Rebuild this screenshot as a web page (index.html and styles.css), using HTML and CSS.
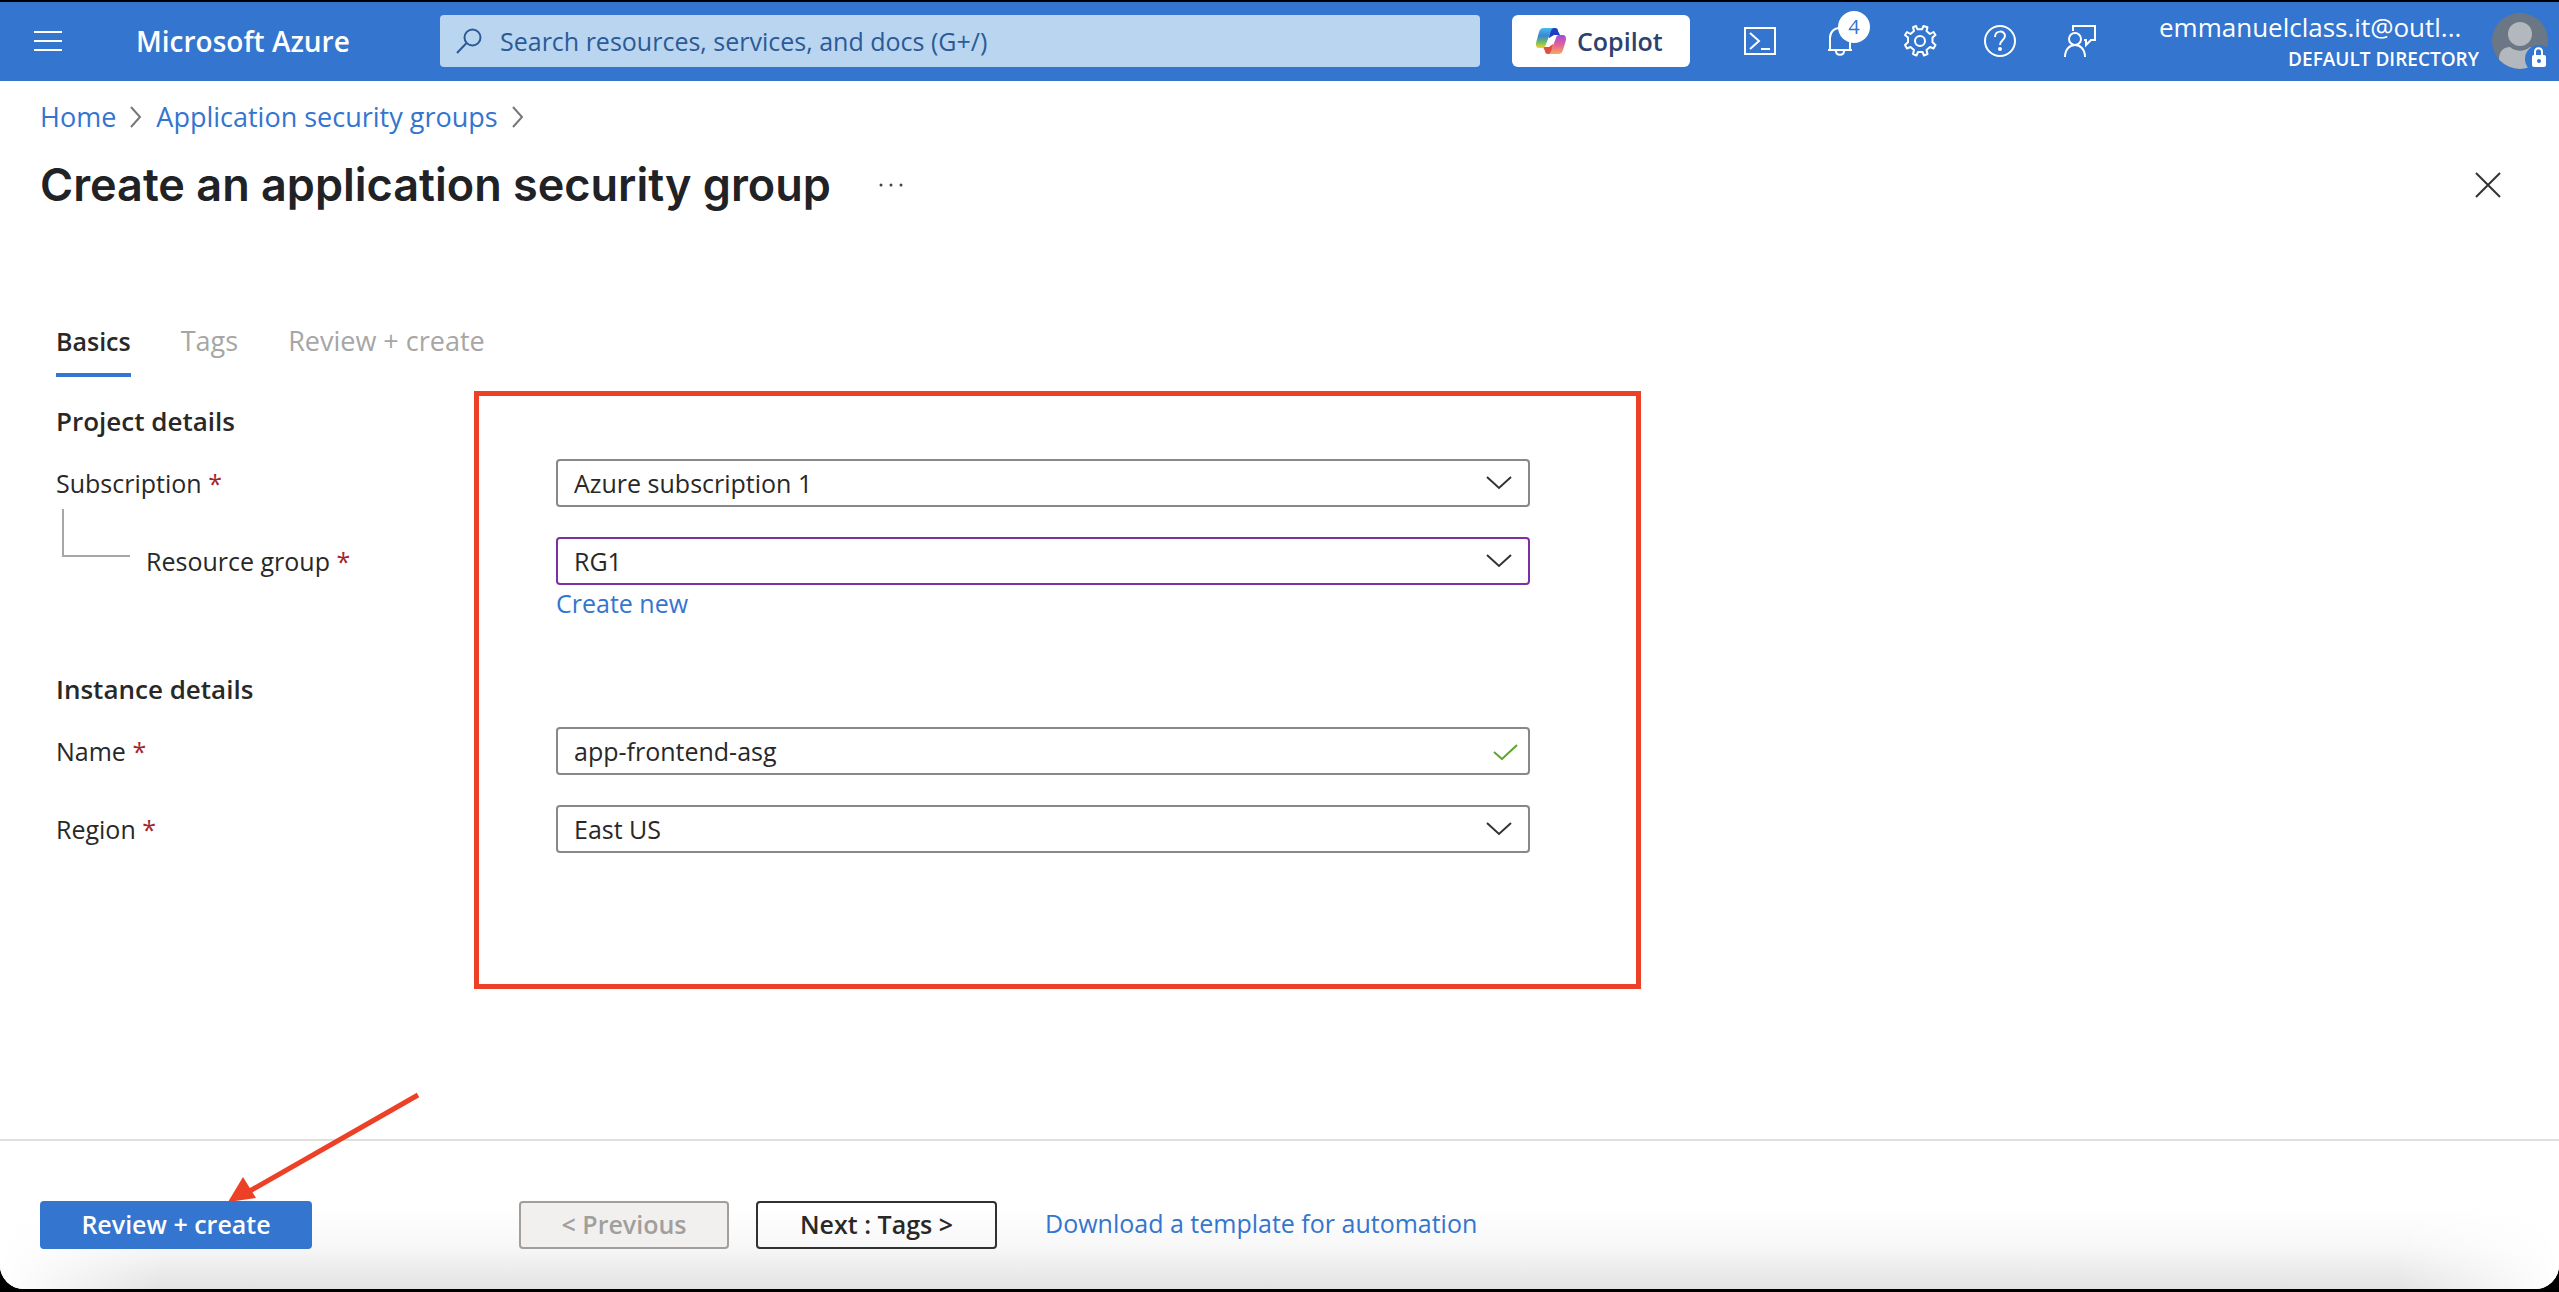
FILE: index.html
```html
<!DOCTYPE html>
<html lang="en">
<head>
<meta charset="utf-8">
<title>Create an application security group - Microsoft Azure</title>
<link rel="stylesheet" href="styles.css">
</head>
<body>
<div class="window">
  <header class="topbar">
    <button class="icon-btn menu-btn" aria-label="Show portal menu">
      <svg width="28" height="20" viewBox="0 0 28 20"><path d="M0 1h28M0 10h28M0 19h28" stroke="#fff" stroke-width="2"/></svg>
    </button>
    <a class="brand" href="#">Microsoft Azure</a>
    <label class="search">
      <svg width="26" height="26" viewBox="0 0 26 26" fill="none" stroke="#2b5a96" stroke-width="2"><circle cx="16.500" cy="9.500" r="8"/><path d="M10.500 15L1 25"/></svg>
      <input type="search" placeholder="Search resources, services, and docs (G+/)" aria-label="Search resources, services, and docs">
    </label>
    <button class="copilot">
      <svg width="30" height="28" viewBox="0 0 30 28">
        <defs>
          <linearGradient id="ca" x1="0" y1="0" x2="0" y2="1"><stop offset="0" stop-color="#4cb8f0"/><stop offset=".4" stop-color="#3a86d0"/><stop offset=".7" stop-color="#6fbd62"/><stop offset="1" stop-color="#f7d02c"/></linearGradient>
          <linearGradient id="cb" x1="0" y1="0" x2="0" y2="1"><stop offset="0" stop-color="#a04de0"/><stop offset=".5" stop-color="#e0609a"/><stop offset="1" stop-color="#f7a85c"/></linearGradient>
        </defs>
        <path d="M14 1h5c2 0 3 1 3 3l2 4h-6l-5 3z" fill="#1d3fc0"/>
        <path d="M16 27h-4c-2 0-3-1-3-3l-2-4h6l4-3z" fill="#e0503c"/>
        <path d="M8 1h10c-2 0-3 2-4 6l-4 10c-1 3-2 4-4 4H4c-4 0-4-2-4-5L3 5c1-3 2-4 5-4z" fill="url(#ca)"/>
        <path d="M22 27H12c2 0 3-2 4-6l4-10c1-3 2-3 4-3h2c4 0 4 2 4 5l-3 10c-1 3-2 4-5 4z" fill="url(#cb)"/>
      </svg>
      <span>Copilot</span>
    </button>
    <nav class="tools" aria-label="Portal tools">
      <button class="icon-btn" aria-label="Cloud Shell">
        <svg width="34" height="34" viewBox="0 0 34 34" fill="none" stroke="#fff" stroke-width="2"><path d="M2 4h30v26H2z"/><path d="M7 9l9 8-9 8M18 25h9"/></svg>
      </button>
      <button class="icon-btn" aria-label="Notifications">
        <svg width="34" height="34" viewBox="0 0 34 34" fill="none" stroke="#fff" stroke-width="2"><path d="M7 26V14c0-6 4-10 10-10s10 4 10 10v12M5 26h24M13 27c0 5 8 5 8 0"/></svg>
        <span class="count">4</span>
      </button>
      <button class="icon-btn" aria-label="Settings">
        <svg width="34" height="34" viewBox="0 0 34 34" fill="none" stroke="#fff" stroke-width="2" stroke-linejoin="round"><circle cx="17" cy="17" r="5"/><path d="M14.500 5.300L13 2l-3 1.200 1 3.800-3.500 3-3.500-2-2 3 3 2.600v4.600L2 21l2 3.500 3.500-1.500 3.500 3-1 4 3.500 1.500 1.500-3.500h4.500l1.500 3.500 3.500-1.500-1-4 3.500-3 3.500 1.500 2-3.500-3-2.800v-4.600l3-2.600-2-3-3.500 2-3.500-3 1-3.800L20.500 2 19 5.300z"/></svg>
      </button>
      <button class="icon-btn" aria-label="Help">
        <svg width="34" height="34" viewBox="0 0 34 34" fill="none" stroke="#fff" stroke-width="2"><circle cx="17" cy="17" r="15"/><path d="M12 13c0-7 10-7 10-1 0 4-5 4-5 9"/><circle cx="17" cy="25" r="1" fill="#fff"/></svg>
      </button>
      <button class="icon-btn" aria-label="Feedback">
        <svg width="34" height="34" viewBox="0 0 34 34" fill="none" stroke="#fff" stroke-width="2"><circle cx="12" cy="15" r="6"/><path d="M2 33c0-16 20-16 20 0M10 7V2h22v14h-4l-5 5v-5h-2"/></svg>
      </button>
    </nav>
    <button class="account">
      <span class="who"><span class="mail">emmanuelclass.it@outl...</span><span class="dir">DEFAULT DIRECTORY</span></span>
      <svg width="60" height="60" viewBox="0 0 60 60">
        <defs><clipPath id="av"><circle cx="29" cy="30" r="28"/></clipPath></defs>
        <g clip-path="url(#av)"><path d="M0 0h60v60H0z" fill="#6b7785"/><circle cx="29" cy="23" r="12" fill="#b3b8be"/><path d="M8 60V48c0-8 5-12 11-12 6 5 14 5 20 0 6 0 11 4 11 12v12z" fill="#b3b8be"/></g>
        <circle cx="48" cy="48" r="14" fill="#3375cf"/>
        <path d="M44 44v-3c0-5 7-5 7 0v3" fill="none" stroke="#fff" stroke-width="2"/><rect x="41" y="44" width="14" height="12" rx="2" fill="#fff"/><circle cx="48" cy="50" r="2" fill="#3375cf"/>
      </svg>
    </button>
  </header>

  <main class="page">
    <nav class="crumbs" aria-label="Breadcrumb">
      <a href="#">Home</a>
      <svg width="12" height="22" viewBox="0 0 12 22" fill="none" stroke="#77767a" stroke-width="2"><path d="M1 1l9 10-9 10"/></svg>
      <a href="#">Application security groups</a>
      <svg width="12" height="22" viewBox="0 0 12 22" fill="none" stroke="#77767a" stroke-width="2"><path d="M1 1l9 10-9 10"/></svg>
    </nav>
    <div class="title-row">
      <h1>Create an application security group</h1>
      <button class="icon-btn" aria-label="More actions">
        <svg width="24" height="4" viewBox="0 0 24 4" fill="#444"><circle cx="2" cy="2" r="1.500"/><circle cx="12" cy="2" r="1.500"/><circle cx="22" cy="2" r="1.500"/></svg>
      </button>
      <button class="icon-btn close" aria-label="Close">
        <svg width="26" height="26" viewBox="0 0 26 26" stroke="#333" stroke-width="2"><path d="M1 1l24 24M25 1L1 25"/></svg>
      </button>
    </div>

    <div class="tabs" role="tablist">
      <button class="tab active" role="tab" aria-selected="true">Basics</button>
      <button class="tab" role="tab">Tags</button>
      <button class="tab" role="tab">Review + create</button>
    </div>

    <form class="form">
      <div class="highlight"></div>
      <h2>Project details</h2>
      <div class="row">
        <label for="sub">Subscription <b>*</b></label>
        <div class="field"><select id="sub"><option>Azure subscription 1</option></select>
          <svg class="mark chevron" width="26" height="14" viewBox="0 0 26 14"><path d="M1 1l12 11L25 1"/></svg></div>
      </div>
      <div class="row nested">
        <label for="rg">Resource group <b>*</b></label>
        <div class="field"><select id="rg" class="edited"><option>RG1</option></select>
          <svg class="mark chevron" width="26" height="14" viewBox="0 0 26 14"><path d="M1 1l12 11L25 1"/></svg></div>
      </div>
      <a class="create-new" href="#">Create new</a>
      <h2 class="second">Instance details</h2>
      <div class="row">
        <label for="name">Name <b>*</b></label>
        <div class="field"><input id="name" type="text" value="app-frontend-asg">
          <svg class="mark check" width="26" height="16" viewBox="0 0 26 16"><path d="M1 8l8 7L24 1"/></svg></div>
      </div>
      <div class="row">
        <label for="region">Region <b>*</b></label>
        <div class="field"><select id="region"><option>East US</option></select>
          <svg class="mark chevron" width="26" height="14" viewBox="0 0 26 14"><path d="M1 1l12 11L25 1"/></svg></div>
      </div>
    </form>
  </main>

  <footer class="actions">
    <button class="btn primary">Review + create</button>
    <button class="btn previous" disabled>&lt; Previous</button>
    <button class="btn next">Next : Tags &gt;</button>
    <a href="#">Download a template for automation</a>
    <svg class="arrow" width="194" height="114" viewBox="0 0 194 114"><path d="M190 5L20 102" stroke="#ec4027" stroke-width="5"/><path d="M0 112L15 87l13 21z" fill="#ec4027"/></svg>
  </footer>
</div>
</body>
</html>
```
FILE: styles.css
```css
* { box-sizing: border-box; }
html, body { height: 100%; }
body {
  margin: 0;
  padding: 2px 0 3px;
  background: #000;
  color: #292827;
  font: 25px/32px "Open Sans", "Noto Sans", sans-serif;
}
button, input, select { font: inherit; color: inherit; }
a { color: #3375cf; text-decoration: none; }
svg { display: block; flex: none; }

.window {
  display: flex;
  flex-direction: column;
  min-height: 100%;
  overflow: hidden;
  background: #fff;
  border-radius: 0 0 24px 24px;
}

.icon-btn {
  position: relative;
  display: flex;
  padding: 0;
  border: 0;
  background: none;
}

/* Top bar */
.topbar {
  display: flex;
  align-items: center;
  height: 79px;
  padding: 0 8px 2px 34px;
  background: #3375cf;
  color: #fff;
}
.brand {
  width: 304px;
  margin-left: 74px;
  color: #fff;
  font-size: 28px;
  font-weight: 600;
}
.search {
  display: flex;
  align-items: center;
  gap: 18px;
  flex: 0 1 1040px;
  height: 52px;
  padding: 0 16px;
  border-radius: 4px;
  background: #b9d5f0;
}
.search input {
  flex: 1;
  min-width: 0;
  padding: 0;
  border: 0;
  outline: 0;
  background: none;
}
.search input::placeholder { color: #2b5a96; opacity: 1; }
.copilot {
  display: flex;
  align-items: center;
  gap: 11px;
  height: 52px;
  width: 178px;
  margin-left: 32px;
  padding: 0 24px;
  border: 0;
  border-radius: 6px;
  background: #fff;
  color: #2c4170;
  font-weight: 600;
}
.tools {
  display: flex;
  gap: 46px;
  margin-left: 53px;
}
.count {
  position: absolute;
  left: 15px;
  top: -13px;
  width: 32px;
  height: 32px;
  border-radius: 50%;
  background: #fff;
  color: #3375cf;
  font-size: 20px;
  line-height: 32px;
  text-align: center;
}
.account {
  display: flex;
  align-items: center;
  gap: 12px;
  margin-left: auto;
  padding: 0;
  border: 0;
  background: none;
}
.who {
  display: flex;
  flex-direction: column;
  width: 320px;
  padding-top: 4px;
}
.mail { font-size: 26px; text-align: left; }
.dir {
  font-size: 19px;
  font-weight: 600;
  text-align: right;
}

/* Page heading */
.page { flex: 1; padding: 20px 40px 0; }
.crumbs {
  display: flex;
  align-items: center;
  gap: 14px;
  font-size: 27px;
}
.title-row {
  display: flex;
  align-items: center;
  gap: 48px;
  margin-top: 20px;
  padding-right: 18px;
}
h1 {
  margin: 0;
  color: #212226;
  font: 600 45px/64px Inter, sans-serif;
}
.close { margin-left: auto; }

/* Tabs */
.tabs {
  display: flex;
  gap: 50px;
  margin: 108px 16px 0;
}
.tab {
  padding: 0 0 16px;
  border: 0;
  border-bottom: 4px solid transparent;
  background: none;
  color: #a6a6a6;
  font-size: 27px;
}
.tab.active {
  border-color: #3375cf;
  color: #292827;
  font-size: 25px;
  font-weight: 600;
}

/* Form */
.form { position: relative; margin: 28px 16px 0; }
h2 {
  margin: 0 0 22px;
  font-size: 26px;
  line-height: 32px;
  font-weight: 600;
}
.second { margin-top: 54px; }
.row {
  display: flex;
  align-items: center;
  margin-bottom: 30px;
}
.row label { width: 500px; }
.row b { color: #a4262c; font-weight: 400; }
.field {
  position: relative;
  width: 974px;
}
.field select, .field input {
  display: block;
  width: 100%;
  height: 48px;
  padding: 0 16px;
  border: 2px solid #8a8886;
  border-radius: 4px;
  outline: 0;
  background: #fff;
  appearance: none;
}
.field select.edited { border-color: #7f2fa3; }
.mark {
  position: absolute;
  top: 17px;
  fill: none;
  stroke-width: 2;
}
.chevron { right: 18px; stroke: #333; }
.check { right: 11px; stroke: #5ea52c; }
.nested { margin-bottom: 2px; }
.nested label { position: relative; padding-left: 90px; }
.nested label::before {
  content: "";
  position: absolute;
  left: 6px;
  bottom: 20px;
  width: 66px;
  height: 46px;
  border: solid #a6a6a6;
  border-width: 0 0 2px 2px;
}
.create-new { display: block; width: max-content; margin-left: 500px; }
.highlight {
  position: absolute;
  left: 418px;
  top: -14px;
  width: 1167px;
  height: 598px;
  border: 5px solid #ec4027;
  pointer-events: none;
}

/* Footer */
.actions {
  position: relative;
  display: flex;
  align-items: flex-start;
  height: 150px;
  padding: 60px 40px 0;
  border-top: 2px solid #dfdfdf;
  background:
    linear-gradient(90deg, #fff, transparent 160px, transparent calc(100% - 160px), #fff),
    linear-gradient(#fff 45%, #f7f7f7 72%, #e3e3e3);
}
.btn {
  height: 48px;
  padding: 0 0 2px;
  border: 2px solid;
  border-radius: 4px;
  font-weight: 600;
}
.primary { width: 272px; border-color: #3375cf; background: #3375cf; color: #fff; }
.previous { width: 210px; margin-left: 207px; border-color: #a19f9d; background: #f1f0ee; color: #a19f9d; }
.next { width: 241px; margin-left: 27px; border-color: #323130; background: none; }
.actions a { margin: 6px 0 0 48px; }
.arrow { position: absolute; left: 228px; top: -51px; }
```
